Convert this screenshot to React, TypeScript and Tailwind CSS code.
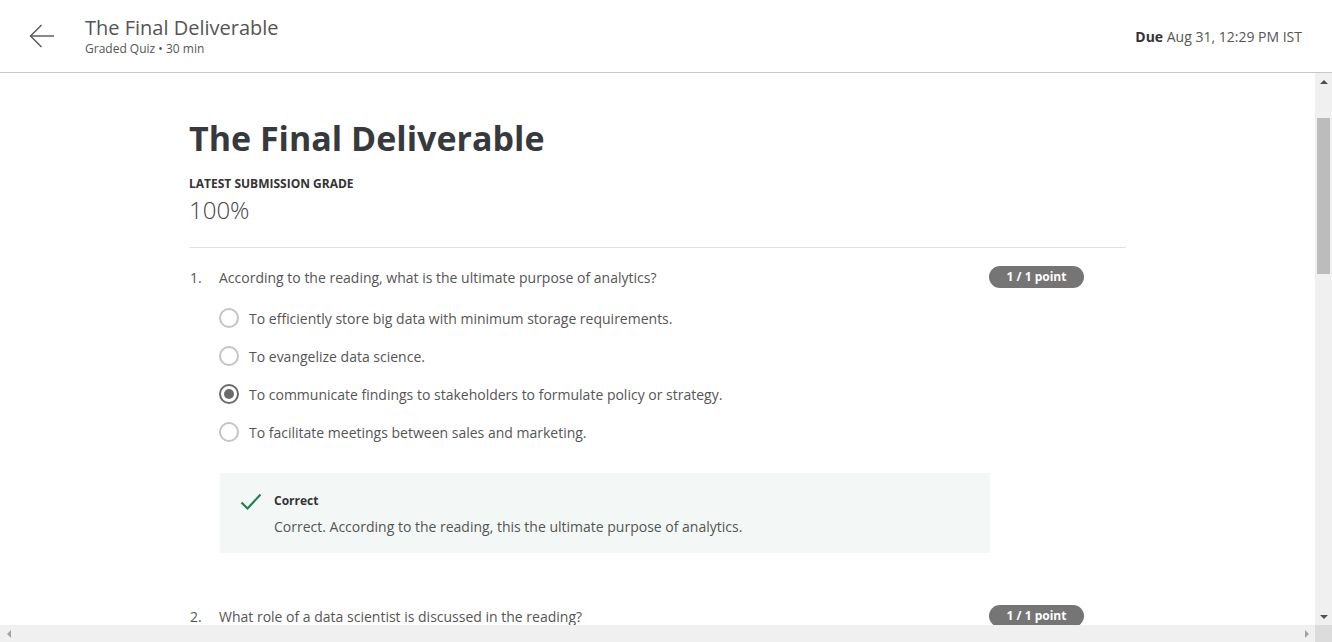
import React from "react";

const options = [
  "To efficiently store big data with minimum storage requirements.",
  "To evangelize data science.",
  "To communicate findings to stakeholders to formulate policy or strategy.",
  "To facilitate meetings between sales and marketing.",
];

function Radio({ checked }: { checked?: boolean }) {
  return (
    <span
      className={
        "flex h-[20px] w-[20px] items-center justify-center rounded-full border-2 " +
        (checked ? "border-[#6b6b6b]" : "border-[#c4c4c4]")
      }
    >
      {checked && <span className="h-[10px] w-[10px] rounded-full bg-[#6b6b6b]" />}
    </span>
  );
}

function PointBadge() {
  return (
    <span className="flex h-[22px] w-[95px] items-center justify-center rounded-full bg-[#757575] text-[12px] font-bold text-white">
      1 / 1 point
    </span>
  );
}

function Question({ num, text }: { num: number; text: string }) {
  return (
    <div className="flex h-[22px] items-center justify-between pr-[42px]">
      <div className="flex items-center text-[14px] text-[#555]">
        <span className="w-[30px] pl-[1px]">{num}.</span>
        <span>{text}</span>
      </div>
      <PointBadge />
    </div>
  );
}

export default function App() {
  return (
    <div
      className="flex h-[642px] w-[1332px] flex-col overflow-hidden bg-white"
      style={{ fontFamily: '"Open Sans", "Noto Sans", sans-serif' }}
    >
      <header className="flex h-[73px] shrink-0 items-center justify-between border-b border-[#c8c8c8] pr-[30px]">
        <div className="flex items-center">
          <button className="ml-[29px] mr-[30px] text-[#555]">
            <svg width="26" height="24" viewBox="0 0 26 24" fill="none" stroke="currentColor" strokeWidth="1.4">
              <path d="M25 12H1.5" />
              <path d="M12.5 1 1.5 12l11 11" />
            </svg>
          </button>
          <div className="flex flex-col">
            <span className="text-[20px] leading-[26px] text-[#555]">The Final Deliverable</span>
            <span className="text-[12px] leading-[16px] text-[#555]">Graded Quiz • 30 min</span>
          </div>
        </div>
        <div className="text-[14px] text-[#555]">
          <span className="font-bold text-[#333]">Due</span> Aug 31, 12:29 PM IST
        </div>
      </header>

      <div className="flex min-h-0 flex-1">
        <main className="min-w-0 flex-1 overflow-hidden pl-[189px] pt-[43px]">
          <div className="w-[937px]">
            <h1 className="text-[34px] font-bold leading-[44px] text-[#373a3c]">The Final Deliverable</h1>
            <div className="mt-[16px] text-[12px] font-bold leading-[16px] text-[#333]">LATEST SUBMISSION GRADE</div>
            <div className="mt-[3px] text-[24px] font-light leading-[30px] text-[#444]">100%</div>
            <div className="mt-[22px] border-t border-[#e1e1e1]" />

            <div className="mt-[18px]">
              <Question num={1} text="According to the reading, what is the ultimate purpose of analytics?" />
              <div className="mt-[20px] flex flex-col gap-[18px] pl-[30px]">
                {options.map((o, i) => (
                  <label key={o} className="flex h-[20px] items-center gap-[10px] text-[14px] text-[#555]">
                    <Radio checked={i === 2} />
                    <span>{o}</span>
                  </label>
                ))}
              </div>
              <div className="ml-[31px] mt-[31px] flex h-[80px] w-[770px] gap-[12px] bg-[#f3f8f6] pl-[20px] pt-[19px]">
                <svg width="22" height="18" viewBox="0 0 22 18" fill="none" stroke="#1f8354" strokeWidth="2.2" className="mt-[1px]">
                  <path d="M1.5 9.5 7.5 15.5 20.5 1.5" />
                </svg>
                <div className="flex flex-col">
                  <span className="text-[12px] font-bold leading-[18px] text-[#333]">Correct</span>
                  <span className="mt-[7px] text-[14px] leading-[20px] text-[#555]">
                    Correct. According to the reading, this the ultimate purpose of analytics.
                  </span>
                </div>
              </div>
            </div>

            <div className="mt-[52px]">
              <Question num={2} text="What role of a data scientist is discussed in the reading?" />
            </div>
          </div>
        </main>

        <div className="flex w-[17px] shrink-0 flex-col bg-[#f0f0f0]">
          <div className="flex h-[17px] items-center justify-center">
            <span className="h-0 w-0 border-x-[4px] border-b-[4px] border-x-transparent border-b-[#505050]" />
          </div>
          <div className="mx-[2px] mt-[28px] h-[156px] bg-[#bcbcbc]" />
          <div className="flex-1" />
          <div className="flex h-[17px] items-center justify-center">
            <span className="h-0 w-0 border-x-[4px] border-t-[4px] border-x-transparent border-t-[#505050]" />
          </div>
        </div>
      </div>

      <div className="flex h-[17px] shrink-0 bg-[#f0f0f0]">
        <div className="flex w-[17px] items-center justify-center">
          <span className="h-0 w-0 border-y-[4px] border-r-[4px] border-y-transparent border-r-[#a3a3a3]" />
        </div>
        <div className="flex-1" />
        <div className="flex w-[17px] items-center justify-center">
          <span className="h-0 w-0 border-y-[4px] border-l-[4px] border-y-transparent border-l-[#a3a3a3]" />
        </div>
        <div className="w-[17px] bg-[#dcdcdc]" />
      </div>
    </div>
  );
}
